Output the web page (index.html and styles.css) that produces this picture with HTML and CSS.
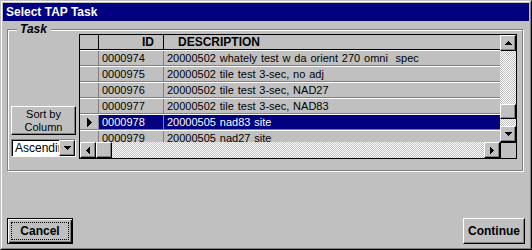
FILE: index.html
```html
<!DOCTYPE html>
<html lang="en">
<head>
    <meta charset="UTF-8" />
    <title>Select TAP Task</title>
    <link rel="stylesheet" href="styles.css">
</head>
<body>
    <div class="window">
        <div class="frame">
            <div class="titlebar">Select TAP Task</div>
            <div class="content">
                <fieldset class="group">
                    <legend>Task</legend>
                    <div class="group-inner">
                        <div class="side">
                            <button class="btn sort">Sort by<br>Column</button>
                            <div class="combo">
                                <span class="combo-text">Ascending</span>
                                <span class="raised combo-btn">
                                    <svg width="7" height="4" viewBox="0 0 7 4"><path d="M0 0h7v1h-1v1h-1v1h-1v1h-1v-1h-1v-1h-1v-1h-1z"/></svg>
                                </span>
                            </div>
                        </div>
                        <div class="grid">
                            <div class="grid-main">
                                <div class="sheet">
                                    <div class="row head">
                                        <div class="cell c-sel"></div>
                                        <div class="cell c-id">ID</div>
                                        <div class="cell c-desc">DESCRIPTION</div>
                                    </div>
                                    <div class="row">
                                        <div class="cell c-sel"></div>
                                        <div class="cell c-id">0000974</div>
                                        <div class="cell c-desc">20000502 whately test w da orient 270 omni&nbsp; spec</div>
                                    </div>
                                    <div class="row">
                                        <div class="cell c-sel"></div>
                                        <div class="cell c-id">0000975</div>
                                        <div class="cell c-desc">20000502 tile test 3-sec, no adj</div>
                                    </div>
                                    <div class="row">
                                        <div class="cell c-sel"></div>
                                        <div class="cell c-id">0000976</div>
                                        <div class="cell c-desc">20000502 tile test 3-sec, NAD27</div>
                                    </div>
                                    <div class="row">
                                        <div class="cell c-sel"></div>
                                        <div class="cell c-id">0000977</div>
                                        <div class="cell c-desc">20000502 tile test 3-sec, NAD83</div>
                                    </div>
                                    <div class="row sel">
                                        <div class="cell c-sel">
                                            <svg width="5" height="9" viewBox="0 0 5 9"><path d="M0 0h1v1h1v1h1v1h1v1h1v1h-1v1h-1v1h-1v1h-1v1h-1z"/></svg>
                                        </div>
                                        <div class="cell c-id">0000978</div>
                                        <div class="cell c-desc">20000505 nad83 site</div>
                                    </div>
                                    <div class="row">
                                        <div class="cell c-sel"></div>
                                        <div class="cell c-id">0000979</div>
                                        <div class="cell c-desc">20000505 nad27 site</div>
                                    </div>
                                </div>
                                <div class="vscroll">
                                    <span class="raised sbtn">
                                        <svg width="7" height="4" viewBox="0 0 7 4"><path d="M3 0h1v1h1v1h1v1h1v1h-7v-1h1v-1h1v-1h1z"/></svg>
                                    </span>
                                    <div class="track">
                                        <span class="raised vthumb"></span>
                                    </div>
                                    <span class="raised sbtn">
                                        <svg width="7" height="4" viewBox="0 0 7 4"><path d="M0 0h7v1h-1v1h-1v1h-1v1h-1v-1h-1v-1h-1v-1h-1z"/></svg>
                                    </span>
                                </div>
                            </div>
                            <div class="hbar">
                                <span class="raised sbtn">
                                    <svg width="4" height="7" viewBox="0 0 4 7"><path d="M3 0h1v7h-1v-1h-1v-1h-1v-1h-1v-1h1v-1h1v-1h1z"/></svg>
                                </span>
                                <span class="raised sbtn"></span>
                                <div class="track"></div>
                                <span class="raised sbtn">
                                    <svg width="4" height="7" viewBox="0 0 4 7"><path d="M0 0h1v1h1v1h1v1h1v1h-1v1h-1v1h-1v1h-1z"/></svg>
                                </span>
                                <span class="corner"></span>
                            </div>
                        </div>
                    </div>
                </fieldset>
                <div class="actions">
                    <button class="btn default"><span class="focus">Cancel</span></button>
                    <button class="btn cont">Continue</button>
                </div>
            </div>
        </div>
    </div>
</body>
</html>
```

FILE: styles.css
```css
* {
    box-sizing: border-box;
}
body {
    margin: 0;
    background: #c0c0c0;
    font-family: "Liberation Sans", Arial, sans-serif;
    font-size: 11px;
    color: #000;
}
.window {
    width: 532px;
    height: 250px;
    border: 1px solid;
    border-color: #c0c0c0 #000 #000 #c0c0c0;
}
.frame {
    height: 100%;
    border: 1px solid;
    border-color: #fff #808080 #808080 #fff;
    padding: 1px;
    display: flex;
    flex-direction: column;
}
.titlebar {
    height: 18px;
    line-height: 18px;
    padding-left: 3px;
    background: #000080;
    color: #fff;
    font-size: 12px;
    font-weight: bold;
}
.content {
    flex: 1;
    padding: 0 6px 0 4px;
}
.group {
    margin: 3px 0 0;
    padding: 0;
    min-width: 0;
    border: 1px solid #808080;
    box-shadow: inset 1px 1px #fff, 1px 1px #fff;
}
.group legend {
    margin-left: 9px;
    padding: 0 4px 0 3px;
    background: #c0c0c0;
    font-size: 12px;
    font-weight: bold;
    font-style: italic;
    line-height: 11px;
}
.group-inner {
    display: flex;
    gap: 3px;
    margin-top: -1px;
    padding: 0 4px 11px 3px;
}
.side {
    width: 65px;
    display: flex;
    flex-direction: column;
    justify-content: flex-end;
    gap: 4px;
    padding-bottom: 2px;
}
.btn {
    padding: 0;
    background: #c0c0c0;
    border: 1px solid;
    border-color: #fff #000 #000 #fff;
    box-shadow: inset -1px -1px #808080;
    font-family: inherit;
    font-size: 12px;
    font-weight: bold;
    color: #000;
}
.sort {
    height: 29px;
    font-size: 11px;
    font-weight: normal;
    line-height: 13px;
}
.combo {
    height: 18px;
    display: flex;
    background: #fff;
    border: 1px solid;
    border-color: #808080 #fff #fff #808080;
    box-shadow: inset 1px 1px #000;
}
.combo-text {
    flex: 1;
    overflow: hidden;
    white-space: nowrap;
    padding: 1px 0 0 3px;
    font-size: 12px;
    line-height: 14px;
}
.raised {
    display: flex;
    align-items: center;
    justify-content: center;
    background: #c0c0c0;
    border: 1px solid;
    border-color: #fff #000 #000 #fff;
    box-shadow: inset -1px -1px #808080;
}
.combo-btn {
    width: 16px;
    height: 16px;
}
svg {
    display: block;
    shape-rendering: crispEdges;
}
.grid {
    width: 438px;
    height: 125px;
    border: 1px solid #000;
    display: flex;
    flex-direction: column;
}
.grid-main {
    display: flex;
    height: 107px;
}
.sheet {
    flex: 1;
    overflow: hidden;
    word-spacing: 0.8px;
}
.row {
    display: flex;
    height: 16px;
    border-top: 1px solid #fff;
    border-bottom: 1px solid #808080;
    line-height: 14px;
}
.row.head {
    height: 15px;
    border-top: 0;
    border-bottom-color: #000;
    font-size: 12px;
    font-weight: bold;
}
.cell {
    padding-left: 3px;
    border-right: 1px solid #808080;
    white-space: nowrap;
    overflow: hidden;
}
.c-sel {
    width: 19px;
    padding: 0;
    display: flex;
    align-items: center;
    justify-content: center;
}
.c-id {
    width: 65px;
}
.c-desc {
    flex: 1;
    border-right: 0;
}
.head .cell {
    border-right-color: #000;
}
.head .c-id {
    text-align: right;
    padding-right: 9px;
}
.head .c-desc {
    padding-left: 14px;
}
.row.sel .c-id,
.row.sel .c-desc {
    background: #000080;
    color: #fff;
}
.vscroll {
    width: 16px;
    display: flex;
    flex-direction: column;
}
.sbtn {
    width: 16px;
    height: 16px;
    flex: none;
}
.track {
    flex: 1;
    background: repeating-conic-gradient(#c0c0c0 0 25%, #fff 0 50%) 0 0 / 2px 2px;
}
.vthumb {
    height: 15px;
    margin-top: 53px;
}
.hbar {
    display: flex;
    height: 16px;
}
.corner {
    width: 16px;
    border-top: 1px solid #000;
    border-left: 1px solid #000;
}
.actions {
    display: flex;
    justify-content: space-between;
    margin: 47px -2px 0 0;
}
.default {
    width: 66px;
    height: 26px;
    padding: 3px;
    border-color: #000;
    box-shadow: inset 1px 1px #fff, inset -1px -1px #000, inset -2px -2px #808080;
    display: flex;
}
.focus {
    flex: 1;
    border: 1px dotted #000;
    line-height: 16px;
}
.cont {
    width: 62px;
    height: 26px;
}
```
